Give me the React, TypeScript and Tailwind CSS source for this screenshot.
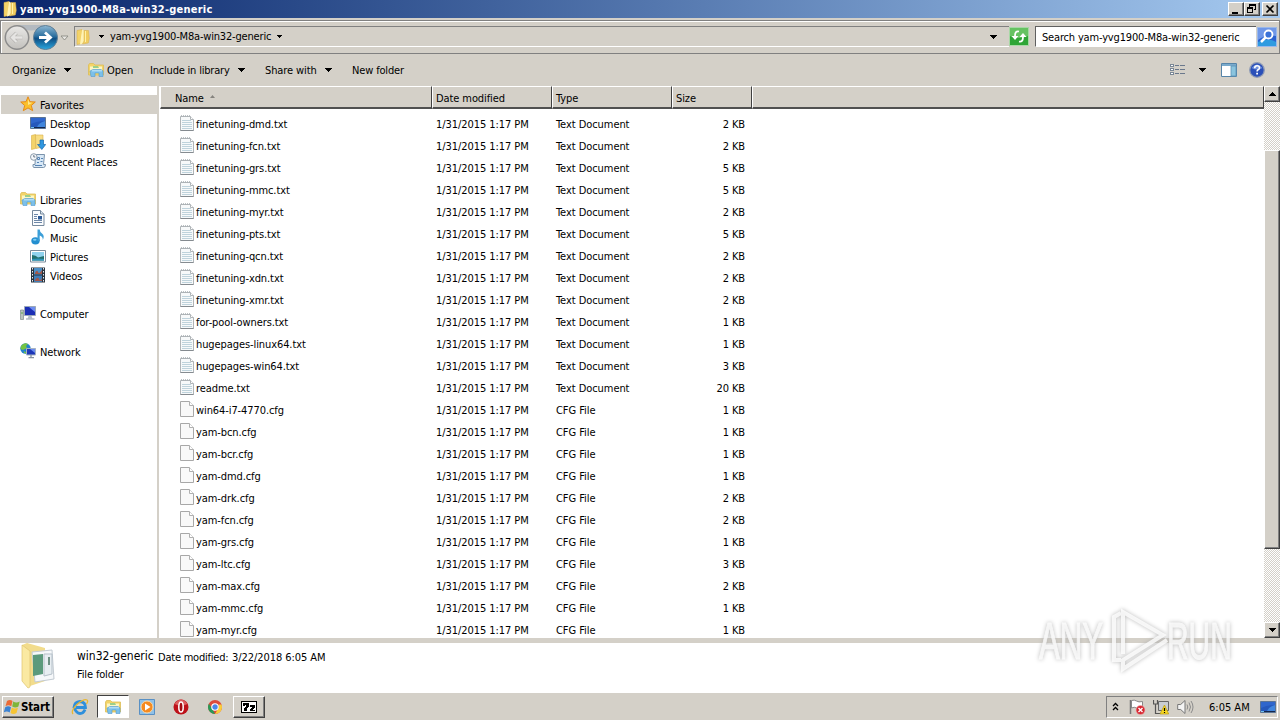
import React from "react";

const raised =
  "bg-[#d4d0c8] border border-t-white border-l-white border-r-[#404040] border-b-[#404040] shadow-[inset_-1px_-1px_0_#808080]";
const checker =
  "bg-[repeating-conic-gradient(#d4d0c8_0%_25%,#ffffff_0%_50%)] bg-[length:2px_2px]";

interface FileRow {
  name: string;
  size: string;
}

const files: FileRow[] = [
  { name: "finetuning-dmd.txt", size: "2 KB" },
  { name: "finetuning-fcn.txt", size: "2 KB" },
  { name: "finetuning-grs.txt", size: "5 KB" },
  { name: "finetuning-mmc.txt", size: "5 KB" },
  { name: "finetuning-myr.txt", size: "2 KB" },
  { name: "finetuning-pts.txt", size: "5 KB" },
  { name: "finetuning-qcn.txt", size: "2 KB" },
  { name: "finetuning-xdn.txt", size: "2 KB" },
  { name: "finetuning-xmr.txt", size: "2 KB" },
  { name: "for-pool-owners.txt", size: "1 KB" },
  { name: "hugepages-linux64.txt", size: "1 KB" },
  { name: "hugepages-win64.txt", size: "3 KB" },
  { name: "readme.txt", size: "20 KB" },
  { name: "win64-i7-4770.cfg", size: "1 KB" },
  { name: "yam-bcn.cfg", size: "1 KB" },
  { name: "yam-bcr.cfg", size: "1 KB" },
  { name: "yam-dmd.cfg", size: "1 KB" },
  { name: "yam-drk.cfg", size: "2 KB" },
  { name: "yam-fcn.cfg", size: "2 KB" },
  { name: "yam-grs.cfg", size: "1 KB" },
  { name: "yam-ltc.cfg", size: "3 KB" },
  { name: "yam-max.cfg", size: "2 KB" },
  { name: "yam-mmc.cfg", size: "1 KB" },
  { name: "yam-myr.cfg", size: "1 KB" },
];

const Caret = ({ className = "" }: { className?: string }) => (
  <svg width="7" height="4" viewBox="0 0 7 4" shapeRendering="crispEdges" className={`shrink-0 ${className}`}>
    <path d="M0 0h7v1H6v1H5v1H4v1H3V3H2V2H1V1H0z" fill="#000" />
  </svg>
);

const SmallCaret = ({ className = "" }: { className?: string }) => (
  <svg width="5" height="3" viewBox="0 0 5 3" shapeRendering="crispEdges" className={`shrink-0 ${className}`}>
    <path d="M0 0h5v1H4v1H3v1H2V2H1V1H0z" fill="#000" />
  </svg>
);

const FolderIcon = () => (
  <svg width="16" height="16" viewBox="0 0 16 16" className="shrink-0">
    <path d="M2 1.5l5-1v14l-5 1z" fill="#f3d36a" stroke="#d8ae43" strokeWidth=".5" />
    <path d="M7 .5l2.5 1.5v12L5 15.5z" fill="#fff3b5" />
    <path d="M9 1.5h4.5l.8 8-1 4.5L7.5 15l1.5-3z" fill="#f0cc60" stroke="#d9b04c" strokeWidth=".5" />
    <path d="M10.5 2v11" stroke="#fff2a8" />
  </svg>
);

const LibraryIcon = () => (
  <svg width="16" height="16" viewBox="0 0 16 16" className="shrink-0">
    <path d="M.5 3l1-1.5h4L7 3h8.500v10H.5z" fill="#f3d468" stroke="#dcbc58" strokeWidth=".8" />
    <path d="M2 4.500h12v5H2z" fill="#fdf6c4" />
    <path d="M5 4h5l1 2H5z" fill="#9ccf8a" />
    <path d="M2 9l3-1.500h8l2 1.500v5.500h-4V11H7v3.500H3z" fill="#7cc0ea" stroke="#529bd0" strokeWidth=".6" />
    <path d="M4 8.800h10" stroke="#c6e9fa" />
  </svg>
);

const StarIcon = () => (
  <svg width="16" height="16" viewBox="0 0 16 16" className="shrink-0">
    <path d="M8 .8l2 4.900 5.300.3-4 3.500 1.400 5.200L8 11.900l-4.700 2.800 1.400-5.200-4-3.500 5.300-.3z" fill="#fbc02b" stroke="#e58a1c" strokeWidth="1" />
    <path d="M8 3l1.200 3.500 3.300.3L8 9z" fill="#ffe98e" />
  </svg>
);

const DesktopIcon = () => (
  <svg width="16" height="16" viewBox="0 0 16 16" className="shrink-0">
    <path d="M.5 2.500h15v11H.5z" fill="#2558bb" stroke="#5b7494" />
    <path d="M1 3h14v3Q7 6 1 9z" fill="#2f66cc" />
    <path d="M7 12Q9 7.500 15 6v6z" fill="#4186dd" />
    <path d="M1 12.500h14" stroke="#14264c" />
    <path d="M1 12.500h3" stroke="#6fc0f0" />
  </svg>
);

const DownloadsIcon = () => (
  <svg width="16" height="16" viewBox="0 0 16 16" className="shrink-0">
    <path d="M1.500 1.500l4-1v14l-4 1z" fill="#f3d36a" stroke="#d8ae43" strokeWidth=".6" />
    <path d="M5.500 1H13v12l-7 1.500z" fill="#f8dd83" stroke="#d9b04c" strokeWidth=".6" />
    <path d="M10 6h3.500v4.500h2.200L11.800 15.500 7.500 10.500H10z" fill="#2f97e0" stroke="#1767ae" strokeWidth=".7" />
  </svg>
);

const RecentIcon = () => (
  <svg width="16" height="16" viewBox="0 0 16 16" className="shrink-0">
    <path d="M5.500 1.500h9l-1 10h2q0 3-2 3H4q-1.500 0-1-3h2z" fill="#d8e8f6" stroke="#7b93ab" />
    <path d="M7.500 4.500h2v2h-2zM10.500 8.500h2M7 9.500h2M11 5.500h2M5 12.500h7" fill="none" stroke="#5683b4" />
    <circle cx="3.800" cy="4" r="3.300" fill="#f5f8fb" stroke="#8c9cab" />
    <path d="M3.800 2v2h1.500" fill="none" stroke="#47596c" strokeWidth=".8" />
  </svg>
);

const DocumentsIcon = () => (
  <svg width="16" height="16" viewBox="0 0 16 16" className="shrink-0">
    <path d="M2.500.5h8l3.500 3.500v11.500H2.500z" fill="#fafcfe" stroke="#76899d" />
    <path d="M10.500.5V4H14" fill="#dce6ef" stroke="#76899d" />
    <path d="M4 4.500h4M4 6.500h3M4 8.500h3M4 10.500h8M4 12.500h8" stroke="#6d87a8" />
    <path d="M8 6h4v3.500H8z" fill="#2c5a97" />
  </svg>
);

const MusicIcon = () => (
  <svg width="16" height="16" viewBox="0 0 16 16" className="shrink-0">
    <ellipse cx="5.500" cy="11.800" rx="4.200" ry="3.600" fill="#238fd0" />
    <path d="M7.500 12V.5h2.200Q9.800 3 12 4.500 15 6.500 12.800 11q.3-3.500-3.100-4.500V12z" fill="#3c9fd8" />
    <ellipse cx="4.800" cy="10.800" rx="1.800" ry="1" fill="#80cdf2" />
  </svg>
);

const PicturesIcon = () => (
  <svg width="16" height="16" viewBox="0 0 16 16" className="shrink-0">
    <path d="M.5 2.500h15v11.500H.5z" fill="#fff" stroke="#7c8c9b" />
    <path d="M2 4h12v8.500H2z" fill="#8fd2ee" />
    <path d="M2 7q4 0 6 2.500L14 8v4.500H2z" fill="#21716f" />
    <path d="M2 11q6-1 12 0v1.500H2z" fill="#2d93ba" />
  </svg>
);

const VideosIcon = () => (
  <svg width="16" height="16" viewBox="0 0 16 16" className="shrink-0">
    <path d="M1 .5h14v15H1z" fill="#29323c" />
    <path d="M4 1h8v6.500H4z" fill="#4b8fc6" />
    <path d="M4 8.500h8V15H4z" fill="#3f7db8" />
    <path d="M5 6q2-4 3-1t4-2v4H5zM5 13q3-4 4-1t3-1v3H5z" fill="#a2574a" />
    <path d="M2.500 1v14M13.500 1v14" stroke="#e5ecf2" strokeDasharray="1.500 1.500" />
  </svg>
);

const ComputerIcon = () => (
  <svg width="16" height="16" viewBox="0 0 16 16" className="shrink-0">
    <path d="M.5 5h3v9.500h-3z" fill="#b9c4bd" stroke="#7f8d8c" strokeWidth=".7" />
    <path d="M1 8h2" stroke="#5aa84c" />
    <path d="M4.500 1.500h11v9h-11z" fill="#1b2fb4" stroke="#9ba8b8" />
    <path d="M9 2h6v5q-4-3-6-5z" fill="#6d8df2" />
    <path d="M8.500 11h3l1 2.500h-5z" fill="#b3bec9" />
    <path d="M6 14h8.500" stroke="#8e9aa6" />
  </svg>
);

const NetworkIcon = () => (
  <svg width="16" height="16" viewBox="0 0 16 16" className="shrink-0">
    <circle cx="5.500" cy="5.500" r="5.200" fill="#2380cd" />
    <path d="M1 3q3-4 7-2L6 3l1 2-4 2-2.500-1zM4 8l3 2-1 .8Q3 10 4 8z" fill="#74c442" />
    <path d="M6.500 5.500h9v6.500h-9z" fill="#1d37b8" stroke="#a6b3c2" />
    <path d="M10 6h5v4z" fill="#6a8cf0" />
    <path d="M11 12v2M8.500 14.700h5.500" stroke="#8793a0" strokeWidth="1.300" />
  </svg>
);

interface NavItem {
  label: string;
  icon?: React.ReactNode;
  child?: boolean;
  selected?: boolean;
}

const navItems: NavItem[] = [
  { label: "Favorites", icon: <StarIcon />, selected: true },
  { label: "Desktop", icon: <DesktopIcon />, child: true },
  { label: "Downloads", icon: <DownloadsIcon />, child: true },
  { label: "Recent Places", icon: <RecentIcon />, child: true },
  { label: "" },
  { label: "Libraries", icon: <LibraryIcon /> },
  { label: "Documents", icon: <DocumentsIcon />, child: true },
  { label: "Music", icon: <MusicIcon />, child: true },
  { label: "Pictures", icon: <PicturesIcon />, child: true },
  { label: "Videos", icon: <VideosIcon />, child: true },
  { label: "" },
  { label: "Computer", icon: <ComputerIcon /> },
  { label: "" },
  { label: "Network", icon: <NetworkIcon /> },
];

const TextFileIcon = () => (
  <svg width="14" height="16" viewBox="0 0 14 16" className="mb-0.5 shrink-0">
    <path d="M.5 1.500h10l3 3v11H.5z" fill="#f7f9fa" stroke="#b0b5b8" />
    <path d="M1 .8h9.500" stroke="#a2a8ad" strokeDasharray="1 1" />
    <path d="M10.500 1.500v3h3" fill="#fff" stroke="#b0b5b8" />
    <path d="M2 5.500h9M2 7.500h10M2 9.500h10M2 11.500h10M2 13.500h10" stroke="#bfd3dc" />
    <path d="M.5 15.500h13" stroke="#858b90" />
  </svg>
);

const BlankFileIcon = () => (
  <svg width="14" height="16" viewBox="0 0 14 16" className="mb-0.5 shrink-0">
    <path d="M.5.5h9l4 4v11H.5z" fill="#f9f9f9" stroke="#a8a8a8" />
    <path d="M9.500.5v4h4" fill="#fff" stroke="#b0b0b0" />
  </svg>
);

const TitleBar = () => (
  <div className="flex h-[18px] items-center bg-linear-to-r from-[#0a246a] to-[#a6caf0] pl-0.5">
    <FolderIcon />
    <span className="ml-0.5 flex-1 pt-0.5 text-[11px] font-bold tracking-[0.23px] text-white">
      yam-yvg1900-M8a-win32-generic
    </span>
    <div className="flex pr-0.5">
      <div className={`h-3.5 w-4 ${raised}`}>
        <svg width="14" height="12" shapeRendering="crispEdges"><path d="M3 9h6v2H3z" /></svg>
      </div>
      <div className={`mr-0.5 h-3.5 w-4 ${raised}`}>
        <svg width="14" height="12" shapeRendering="crispEdges">
          <path d="M4 1h7v6H9V6h1V3H5v1H4zM2 4h6v6H2zm1 2v3h4V6z" fillRule="evenodd" />
        </svg>
      </div>
      <div className={`h-3.5 w-4 ${raised}`}>
        <svg width="14" height="12"><path d="M3.500 2.500l7 7m0-7l-7 7" stroke="#000" strokeWidth="1.700" /></svg>
      </div>
    </div>
  </div>
);

const AddressBar = () => (
  <div className="flex h-9 items-center border-b border-white pt-0.5">
    <div className="flex h-[34px] flex-1 items-center border border-[#808080] shadow-[inset_1px_1px_0_#fff]">
      <svg width="70" height="32" viewBox="0 0 70 32" className="shrink-0">
        <defs>
          <linearGradient id="fwd" x1="0" y1="0" x2="0" y2="1">
            <stop offset="0" stopColor="#8fb9d4" />
            <stop offset=".45" stopColor="#2c6f9f" />
            <stop offset=".55" stopColor="#0f4f84" />
            <stop offset="1" stopColor="#2ba8e0" />
          </linearGradient>
          <linearGradient id="back" x1="0" y1="0" x2="0" y2="1">
            <stop offset="0" stopColor="#e9e8e6" />
            <stop offset="1" stopColor="#c3c1bd" />
          </linearGradient>
        </defs>
        <path d="M16 4h28v3q-14 5-28 0z" fill="#b4bac0" />
        <circle cx="16" cy="16.500" r="11.700" fill="url(#back)" stroke="#8c8c8c" strokeWidth="1.500" />
        <path d="M21.500 16.500H11m4.500-4.500L11 16.500l4.500 4.500" fill="none" stroke="#b4b2af" strokeWidth="3.600" />
        <path d="M21.500 16.500H11m4.500-4.500L11 16.500l4.500 4.500" fill="none" stroke="#e6e5e3" strokeWidth="2.300" />
        <circle cx="44.500" cy="16.500" r="12" fill="url(#fwd)" stroke="#5f7f96" strokeWidth="1" />
        <path d="M38 16.500h11m-5-5l5.500 5-5.500 5" fill="none" stroke="#fff" strokeWidth="2.800" />
        <path d="M60 15h7l-3.500 4z" fill="#e9e7e3" stroke="#8b8b83" strokeWidth=".9" />
      </svg>
      <div className="ml-[3px] flex h-[21px] flex-1 items-center border-t border-b border-l border-t-[#808080] border-b-white border-l-[#808080]">
        <FolderIcon />
        <SmallCaret className="ml-2" />
        <span className="ml-1.5 pt-0.5 text-[11px] tracking-[-0.18px]">yam-yvg1900-M8a-win32-generic</span>
        <SmallCaret className="ml-1.5" />
        <Caret className="mr-3 ml-auto" />
      </div>
      <svg width="20" height="19" viewBox="0 0 20 19" className="shrink-0">
        <path d="M.5.5h19v18H.5z" fill="#2fa536" stroke="#a7d8a5" />
        <path d="M1 1h18v8q-9 4-18 0z" fill="#66c262" />
        <path d="M10 4.500Q6 3.500 6 9v2" fill="none" stroke="#fff" strokeWidth="1.800" />
        <path d="M2.500 9h7L6 13z" fill="#fff" />
        <path d="M10 14.500q4 1 4-4.500V8" fill="none" stroke="#fff" strokeWidth="1.800" />
        <path d="M10.500 10h7L14 6z" fill="#fff" />
      </svg>
      <div className="ml-1.5 flex h-[21px] w-[221px] items-center border-t border-b border-l border-t-[#606060] border-b-white border-l-[#606060] bg-white pl-1.5">
        <span className="pt-[3px] text-[11px] tracking-[-0.17px]">Search yam-yvg1900-M8a-win32-generic</span>
      </div>
      <svg width="20" height="20" viewBox="0 0 20 20" className="mr-0.5 ml-px shrink-0">
        <path d="M.5.5h19v19H.5z" fill="#2b62d0" stroke="#9ab8ea" />
        <path d="M1 1h18v8Q9 7 1 13z" fill="#6f97e8" />
        <path d="M1 15q9-5 18 0v4H1z" fill="#2f9be0" />
        <circle cx="11.500" cy="7.500" r="4" fill="#3b72d8" stroke="#fff" strokeWidth="1.800" />
        <path d="M8.500 10.500L4 15" stroke="#fff" strokeWidth="2.500" />
      </svg>
    </div>
  </div>
);

const Toolbar = () => (
  <div className="flex h-8 items-center pl-3 text-[11px] tracking-[-0.06px] [&_span]:pt-0.5">
    <div className="flex w-[76px] items-center">
      <span className="w-[52px]">Organize</span>
      <Caret />
    </div>
    <div className="flex w-[62px] items-center gap-[3px]">
      <LibraryIcon />
      <span>Open</span>
    </div>
    <div className="flex w-[115px] items-center">
      <span className="w-[88px] tracking-[-0.2px]">Include in library</span>
      <Caret />
    </div>
    <div className="flex w-[87px] items-center">
      <span className="w-[60px] tracking-[-0.1px]">Share with</span>
      <Caret />
    </div>
    <span className="tracking-[-0.15px]">New folder</span>
    <div className="ml-auto flex items-center pr-[15px]">
      <svg width="16" height="14" viewBox="0 0 16 14" shapeRendering="crispEdges">
        <path d="M.5 1.500h3v2h-3zM.5 5.500h3v2h-3zM.5 9.500h3v2h-3z" fill="#fff" stroke="#7a8796" />
        <path d="M5 2.500h4m1 0h5M5 6.500h4m1 0h5M5 10.500h4m1 0h5" stroke="#6a788c" />
      </svg>
      <Caret className="ml-[13px]" />
      <svg width="16" height="14" viewBox="0 0 16 14" className="ml-[15px]">
        <path d="M.5.5h15v13H.5z" fill="#fff" stroke="#5684a8" />
        <path d="M1 2h14" stroke="#79aacc" strokeWidth="2" />
        <path d="M10 3h5v10h-5z" fill="#8ac4de" stroke="#5c93b5" strokeWidth=".8" />
      </svg>
      <svg width="16" height="16" viewBox="0 0 16 16" className="ml-3">
        <circle cx="8" cy="8" r="7.300" fill="#2a4fb8" stroke="#8f9bb5" strokeWidth="1.300" />
        <path d="M2.500 6Q8-1 13.500 6 8 9 2.500 6z" fill="#7091dd" />
        <path d="M5.700 6.200q0-2.500 2.400-2.500t2.300 2.200q0 1.200-1.400 1.900-.9.500-.9 1.700" fill="none" stroke="#fff" strokeWidth="1.600" />
        <path d="M7.200 10.800h1.800v1.800H7.200z" fill="#fff" />
      </svg>
    </div>
  </div>
);

const Sidebar = () => (
  <div className="w-[157px] bg-white pt-[9px] text-[11px] tracking-[-0.1px]">
    {navItems.map((item, i) => (
      <div
        key={i}
        className={`ml-px flex h-[19px] items-center gap-1 pb-px ${item.child ? "pl-[29px]" : "pl-[19px]"} ${item.selected ? "bg-[#d4d0c8]" : ""}`}
      >
        {item.icon}
        <span className="pt-1 leading-4">{item.label}</span>
      </div>
    ))}
  </div>
);

const headerCell =
  "flex h-[23px] items-center border-t border-l border-t-white border-l-white border-r border-r-[#404040] border-b-2 border-b-[#505050] pt-[3px]";

const FileList = () => (
  <div className="flex flex-1 flex-col overflow-hidden bg-white text-[11px] tracking-[-0.09px]">
    <div className="flex bg-[#d4d0c8] leading-4">
      <div className={`w-[272px] pl-3.5 ${headerCell}`}>
        <span>Name</span>
        <svg width="5" height="3" className="mb-1 ml-1.5"><path d="M2.500 0L5 3H0z" fill="#85837e" /></svg>
      </div>
      <div className={`w-[120px] pl-[3px] ${headerCell}`}>Date modified</div>
      <div className={`w-[120px] pl-[3px] ${headerCell}`}>Type</div>
      <div className={`w-[80px] pl-[3px] ${headerCell}`}>Size</div>
      <div className={`flex-1 ${headerCell}`} />
    </div>
    <div className="h-[529px] overflow-hidden pt-1">
      {files.map((file) => {
        const isText = file.name.endsWith(".txt");
        return (
          <div key={file.name} className="flex h-[22px] items-center pl-5 [&_span]:pt-0.5">
            <div className="flex w-64 items-center gap-0.5">
              {isText ? <TextFileIcon /> : <BlankFileIcon />}
              <span>{file.name}</span>
            </div>
            <span className="w-[120px] tracking-[-0.06px]">1/31/2015 1:17 PM</span>
            <span className="w-[120px] tracking-[-0.06px]">{isText ? "Text Document" : "CFG File"}</span>
            <span className="w-[69px] text-right">{file.size}</span>
          </div>
        );
      })}
    </div>
  </div>
);

const ScrollBar = () => (
  <div className={`flex w-4 flex-col ${checker}`}>
    <div className={`flex h-4 items-center justify-center ${raised}`}>
      <Caret className="rotate-180" />
    </div>
    <div className="h-12" />
    <div className={`h-[399px] ${raised}`} />
    <div className="flex-1" />
    <div className={`flex h-4 items-center justify-center ${raised}`}>
      <Caret />
    </div>
  </div>
);

const DetailsPane = () => (
  <div className="flex h-[49px] bg-white pl-5">
    <svg width="36" height="46" viewBox="0 0 36 46" className="shrink-0">
      <path d="M2 2l5-2 18 5v33L10 43 2 37z" fill="#f2dc8c" />
      <path d="M12 9l20-2 2 29-19 3z" fill="#f6f8fa" stroke="#c3cbd2" />
      <path d="M13 12l10-1v20l-10 2z" fill="#5b9a7c" />
      <path d="M24 11h8v20l-8 2z" fill="#e8eef2" stroke="#b5c0c9" />
      <path d="M29 14v8" stroke="#6f9084" strokeWidth="2" />
      <path d="M2 2l8 6v36l-2 1-6-7z" fill="#fae9a2" stroke="#dfc46f" strokeWidth=".7" />
    </svg>
    <div className="ml-[21px] flex flex-col">
      <div className="flex h-[22px] items-center pt-[3px]">
        <span className="w-[81px] text-[12px]">win32-generic</span>
        <span className="w-[74px] pt-1 text-[11px] leading-4 tracking-[-0.22px]">Date modified:</span>
        <span className="pt-1 text-[11px] leading-4 tracking-[-0.06px]">3/22/2018 6:05 AM</span>
      </div>
      <span className="pt-px text-[11px] leading-[18px] tracking-[-0.15px]">File folder</span>
    </div>
  </div>
);

const Watermark = () => (
  <div className="absolute top-[600px] left-[1023px]">
    <svg width="230" height="84" viewBox="0 0 230 84" className="drop-shadow-[0_0_2px_#aaaaaa]">
      <g fill="#fff" stroke="#fff" strokeWidth="1" opacity=".8" fontFamily="Liberation Sans, sans-serif" fontSize="52">
        <text transform="translate(16 59) scale(.6 1)">ANY</text>
        <text transform="translate(144 59) scale(.575 1)">RUN</text>
      </g>
      <path
        d="M98 60h-7V17l7-4M100 54V12l40 23-40 25v9l44-29"
        fill="none"
        stroke="#fff"
        strokeOpacity=".8"
        strokeWidth="4"
      />
    </svg>
  </div>
);

const Taskbar = () => (
  <div className="flex h-7 items-center border-t border-white bg-[#d4d0c8] pl-0.5">
    <div className={`flex h-[22px] w-[52px] items-center pl-px ${raised}`}>
      <svg width="16" height="16" viewBox="0 0 16 16" className="shrink-0">
        <path d="M3 2q3-2 5.500 0L7.300 7.200q-2.800-2-5.800 0z" fill="#ec6b36" />
        <path d="M9.200 2.500q3 2 6.500 0l-1.300 5q-3 2-6.200 0z" fill="#7eb53a" />
        <path d="M1.200 8.300q3-2 5.800 0L5.700 13.500q-3-2-6 0z" fill="#3c83d2" />
        <path d="M7.800 8.600q3 2 6.200 0L12.500 14q-3 2-6 0z" fill="#f6c433" />
      </svg>
      <span className="ml-px pt-0.5 text-[11.500px] font-bold tracking-[-0.15px]">Start</span>
    </div>
    <svg width="18" height="18" viewBox="0 0 18 18" className="ml-[17px] shrink-0">
      <path d="M14 11.500Q12.500 15.500 9 15.500T3 9.500Q3.500 4 9 3.500q5.500.5 5.500 6H5" fill="none" stroke="#2e8fdc" strokeWidth="2.800" />
      <path d="M2 16Q-.5 13 6 6.500 13 .5 16 2q1.500 1-.5 4" fill="none" stroke="#e9b732" strokeWidth="1.300" />
    </svg>
    <div className="ml-2 flex h-[23px] w-8 items-center justify-center border border-t-[#404040] border-r-white border-b-white border-l-[#404040] bg-white">
      <LibraryIcon />
    </div>
    <svg width="16" height="16" viewBox="0 0 16 16" className="ml-2.5 shrink-0">
      <path d="M.5.5h15v15H.5z" fill="#8fc1e8" stroke="#5990c4" />
      <circle cx="8" cy="8" r="6" fill="#f58a1f" stroke="#fbd9a7" />
      <path d="M6 4.500l5.500 3.500L6 11.500z" fill="#fff" />
    </svg>
    <svg width="16" height="16" viewBox="0 0 16 16" className="ml-[18px] shrink-0">
      <circle cx="8" cy="8" r="7.500" fill="#bd1119" />
      <path d="M1.500 5Q8-4 14.500 5 8 8 1.500 5z" fill="#dc5e5e" />
      <ellipse cx="8" cy="8" rx="2.200" ry="5" fill="#a30c12" stroke="#fff" strokeWidth="1.500" />
    </svg>
    <svg width="14" height="14" viewBox="0 0 16 16" className="ml-[19px] shrink-0">
      <circle cx="8" cy="8" r="8" fill="#dd4a3c" />
      <path d="M1 4.200L6 12 8 16A8 8 0 0 1 1 4.200z" fill="#279b57" />
      <path d="M8 16l4-7V5h3.400A8 8 0 0 1 8 16z" fill="#f9ce3b" />
      <circle cx="8" cy="8" r="3.700" fill="#4a86ea" stroke="#fff" strokeWidth="1.200" />
    </svg>
    <div className={`ml-[11px] flex h-[22px] w-8 items-center justify-center ${raised}`}>
      <svg width="16" height="12" viewBox="0 0 16 12" shapeRendering="crispEdges">
        <path d="M0 0h16v12H0z" />
        <path d="M1 1h14v10H1z" fill="#fff" />
        <path d="M2 2h6v3L6 7v3H3V7l2-2V4H4v1H2zM9 4h5v2l-3 3h3v1H9V8l2-2H9z" />
      </svg>
    </div>
    <div className="mr-0.5 ml-auto flex h-[22px] w-[172px] items-center border border-t-[#808080] border-r-white border-b-white border-l-[#808080]">
      <svg width="7" height="10" viewBox="0 0 7 10" className="ml-[5px]">
        <path d="M1 4l2.500-2.500L6 4M1 8l2.500-2.500L6 8" fill="none" stroke="#000" strokeWidth="1.300" />
      </svg>
      <svg width="17" height="16" viewBox="0 0 17 16" className="ml-2.5">
        <path d="M1.500 1v14" stroke="#777" strokeWidth="1.500" />
        <path d="M2.500 1.500q3-1 5 .5t6 .5v7q-4 1-6-.5t-5 0z" fill="#fff" stroke="#888" />
        <circle cx="11.500" cy="11" r="4.500" fill="#d62630" stroke="#f4b0b0" strokeWidth=".6" />
        <path d="M9.500 9l4 4m0-4l-4 4" stroke="#fff" strokeWidth="1.400" />
      </svg>
      <svg width="16" height="16" viewBox="0 0 16 16" className="ml-[7px]">
        <path d="M5.500 2.500h10v9h-10z" fill="#c9cdd1" stroke="#666" />
        <path d="M.5 1v4h4V1M2.500 5v9.500h6" fill="none" stroke="#555" strokeWidth="1.200" />
        <path d="M11.500 6l4.200 9H7z" fill="#f8d81f" stroke="#b99a13" strokeWidth=".7" />
        <path d="M11.500 9v3m0 1v1" stroke="#000" strokeWidth="1.200" />
      </svg>
      <svg width="17" height="16" viewBox="0 0 17 16" className="ml-2">
        <path d="M.7 5.500h3L8 1.500v13l-4.300-4h-3z" fill="#f4f4f4" stroke="#777" />
        <path d="M10 5.500q1.500 2.500 0 5M12 3.500q3 4.500 0 9M14 2q4 6 0 12" fill="none" stroke="#8b8b8b" />
      </svg>
      <span className="ml-[15px] w-[41px] pt-[3px] text-[11px] leading-4">6:05 AM</span>
      <span className="ml-2.5">
        <DesktopIcon />
      </span>
    </div>
  </div>
);

const App: React.FC = () => {
  return (
    <div className="relative flex h-[720px] w-[1280px] flex-col overflow-hidden bg-[#d4d0c8] font-['DejaVu_Sans_Condensed','DejaVu_Sans',sans-serif] whitespace-nowrap text-black">
      <TitleBar />
      <AddressBar />
      <Toolbar />
      <div className="flex h-[552px]">
        <Sidebar />
        <div className="w-[3px] border-r border-white" />
        <FileList />
        <ScrollBar />
      </div>
      <div className="h-[5px] shrink-0" />
      <DetailsPane />
      <Taskbar />
      <Watermark />
    </div>
  );
};

export default App;
